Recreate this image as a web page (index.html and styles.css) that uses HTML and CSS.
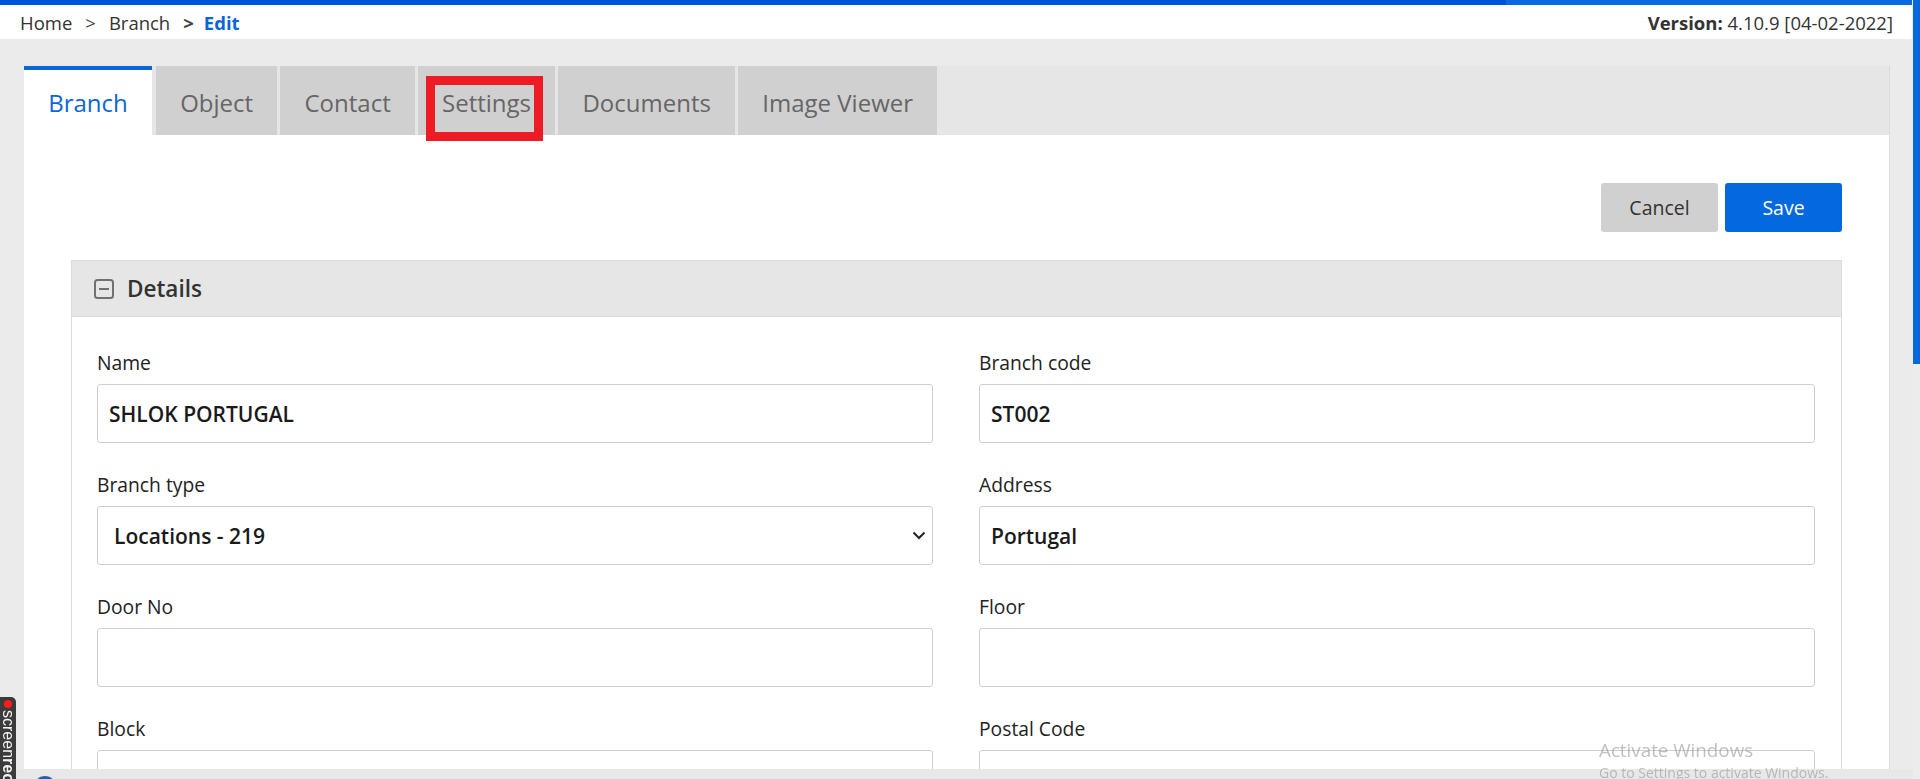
FILE: index.html
```html
<!DOCTYPE html>
<html lang="en">
<head>
<meta charset="utf-8">
<title>Branch - Edit</title>
<link rel="stylesheet" href="styles.css">
</head>
<body>
<div class="app">
  <div class="page">
    <div class="progress"><div class="progress-done"></div><div class="progress-rest"></div></div>
    <header class="topbar">
      <nav class="crumbs">
        <span class="crumb">Home</span>
        <span class="sep">&gt;</span>
        <span class="crumb">Branch</span>
        <span class="sep sep-bold">&gt;</span>
        <span class="crumb crumb-active">Edit</span>
      </nav>
      <div class="version"><b>Version:</b> 4.10.9 [04-02-2022]</div>
    </header>

    <main class="main">
      <section class="card">
        <div class="tabs">
          <div class="tab tab-active">Branch</div>
          <div class="tab">Object</div>
          <div class="tab">Contact</div>
          <div class="tab tab-marked">Settings<span class="highlight"></span></div>
          <div class="tab">Documents</div>
          <div class="tab">Image Viewer</div>
        </div>
        <div class="card-body">
          <div class="actions">
            <button class="btn btn-cancel">Cancel</button>
            <button class="btn btn-save">Save</button>
          </div>
          <div class="panel">
            <div class="panel-head">
              <svg class="collapse-icon" width="20" height="20" viewBox="0 0 20 20"><rect x="1" y="1" width="18" height="18" rx="2.5" fill="none" stroke="#707070" stroke-width="2"/><line x1="5" y1="10" x2="15" y2="10" stroke="#707070" stroke-width="2"/></svg>
              <span class="panel-title">Details</span>
            </div>
            <div class="panel-body">
              <div class="field"><label class="label">Name</label><div class="input">SHLOK PORTUGAL</div></div>
              <div class="field"><label class="label">Branch code</label><div class="input">ST002</div></div>
              <div class="field"><label class="label">Branch type</label>
                <div class="input select"><span>Locations - 219</span>
                  <svg width="14" height="9" viewBox="0 0 14 9"><path d="M1.5 1.5 L7 7 L12.5 1.5" fill="none" stroke="#222" stroke-width="2"/></svg>
                </div>
              </div>
              <div class="field"><label class="label">Address</label><div class="input">Portugal</div></div>
              <div class="field"><label class="label">Door No</label><div class="input"></div></div>
              <div class="field"><label class="label">Floor</label><div class="input"></div></div>
              <div class="field"><label class="label">Block</label><div class="input"></div></div>
              <div class="field"><label class="label">Postal Code</label><div class="input"></div></div>
            </div>
          </div>
        </div>
      </section>
    </main>
  </div>
  <div class="scrollbar"><div class="thumb"></div></div>
</div>

<div class="hbar"></div>
<div class="bubble"></div>
<div class="screenrec"><span class="rec-dot"></span><span class="rec-text">screen<b>rec</b></span></div>
<div class="watermark">
  <div class="wm-title">Activate Windows</div>
  <div class="wm-sub">Go to Settings to activate Windows.</div>
</div>
</body>
</html>
```

FILE: styles.css
```css
html, body {
  margin: 0;
  padding: 0;
  height: 100%;
  overflow: hidden;
}
body {
  background: #ebebeb;
  font-family: "Open Sans", "Liberation Sans", sans-serif;
  color: #333;
}
.app {
  display: flex;
  height: 779px;
}
.page {
  flex: 1;
  min-width: 0;
  overflow: hidden;
}
.scrollbar {
  width: 7px;
  margin-left: 1px;
  background: #ececec;
}
.thumb {
  height: 364px;
  background: #0468df;
}

.progress {
  display: flex;
  height: 5px;
}
.progress-done {
  width: 1506px;
  background: #0052d9;
}
.progress-rest {
  flex: 1;
  background: #0a69e0;
}

.topbar {
  height: 34px;
  background: #fff;
  display: flex;
  align-items: center;
  justify-content: space-between;
  padding: 0 19px 0 20px;
  font-size: 18.5px;
}
.crumbs {
  display: flex;
  align-items: center;
  color: #333;
}
.sep {
  margin: 0 13px;
  color: #444;
}
.sep-bold {
  font-weight: 700;
  margin: 0 10px 0 13px;
}
.crumb-active {
  color: #0a66d8;
  font-weight: 700;
}
.version {
  color: #333;
}
.version b {
  font-weight: 700;
}

.main {
  padding: 27px 22px 0 24px;
}
.card {
  background: #fff;
  border-right: 1px solid #dcdcdc;
  min-height: 720px;
}
.tabs {
  display: flex;
  height: 69px;
  background: #e6e6e6;
}
.tab {
  position: relative;
  box-sizing: border-box;
  height: 69px;
  line-height: 74px;
  padding: 0 24.2px;
  margin-right: 3px;
  font-size: 24px;
  color: #666;
  background: #d0d0d0;
}
.tab-active {
  background: #fff;
  color: #0a66d8;
  border-top: 4px solid #0a66d8;
  line-height: 66px;
  margin-right: 4px;
}
.highlight {
  position: absolute;
  left: 8px;
  top: 10px;
  width: 117px;
  height: 65px;
  box-sizing: border-box;
  border: 9px solid #ed1c24;
}

.card-body {
  padding: 48px 47px 0 47px;
}
.actions {
  display: flex;
  justify-content: flex-end;
  gap: 7px;
  margin-bottom: 28px;
}
.btn {
  width: 117px;
  height: 49px;
  border: 0;
  border-radius: 3px;
  font-family: "Open Sans", "Liberation Sans", sans-serif;
  font-size: 19.5px;
  cursor: pointer;
}
.btn-cancel {
  background: #d0d0d0;
  color: #333;
}
.btn-save {
  background: #0468df;
  color: #fff;
}

.panel {
  border: 1px solid #dcdcdc;
  border-bottom: 0;
}
.panel-head {
  height: 55px;
  background: #e6e6e6;
  border-bottom: 1px solid #dcdcdc;
  display: flex;
  align-items: center;
  padding-left: 22px;
  gap: 13px;
}
.collapse-icon {
  display: block;
}
.panel-title {
  font-size: 22.5px;
  font-weight: 600;
  color: #333;
}
.panel-body {
  display: grid;
  grid-template-columns: 1fr 1fr;
  column-gap: 46px;
  padding: 32px 26px 0 25px;
}
.field {
  margin-bottom: 28px;
}
.label {
  display: block;
  font-size: 19.3px;
  line-height: 27px;
  color: #222;
  margin-bottom: 8px;
}
.input {
  box-sizing: border-box;
  height: 59px;
  border: 1px solid #cfcfcf;
  border-radius: 3px;
  padding: 0 11px;
  display: flex;
  align-items: center;
  font-size: 21px;
  font-weight: 600;
  color: #1a1a1a;
  background: #fff;
}
.select {
  justify-content: space-between;
  padding: 0 6px 0 16px;
}

.hbar {
  position: fixed;
  left: 0;
  bottom: 0;
  width: 1913px;
  height: 10px;
  background: #e8e8e8;
}
.bubble {
  position: fixed;
  left: 34px;
  top: 776px;
  width: 22px;
  height: 22px;
  border-radius: 50%;
  background: #2d5f9e;
}
.screenrec {
  position: fixed;
  left: 0;
  bottom: 0;
  width: 16px;
  height: 82px;
  background: #3b3b3b;
  border-radius: 0 5px 0 0;
  display: flex;
  flex-direction: column;
  align-items: center;
  padding-top: 3px;
  box-sizing: border-box;
  overflow: hidden;
}
.rec-dot {
  width: 8px;
  height: 8px;
  border-radius: 50%;
  background: #ff1a1a;
  flex: none;
}
.rec-text {
  writing-mode: vertical-rl;
  font-family: "Liberation Sans", sans-serif;
  font-size: 16px;
  color: #f2f2f2;
  margin-top: 2px;
  line-height: 16px;
  white-space: nowrap;
}
.rec-text b {
  font-weight: 700;
}
.watermark {
  position: fixed;
  left: 1599px;
  top: 738px;
  color: rgba(140, 140, 140, 0.55);
  font-family: "Open Sans", "Liberation Sans", sans-serif;
  pointer-events: none;
}
.wm-title {
  font-size: 18.8px;
  line-height: 24px;
}
.wm-sub {
  font-size: 14px;
  line-height: 20px;
  margin-top: 1px;
}
```
